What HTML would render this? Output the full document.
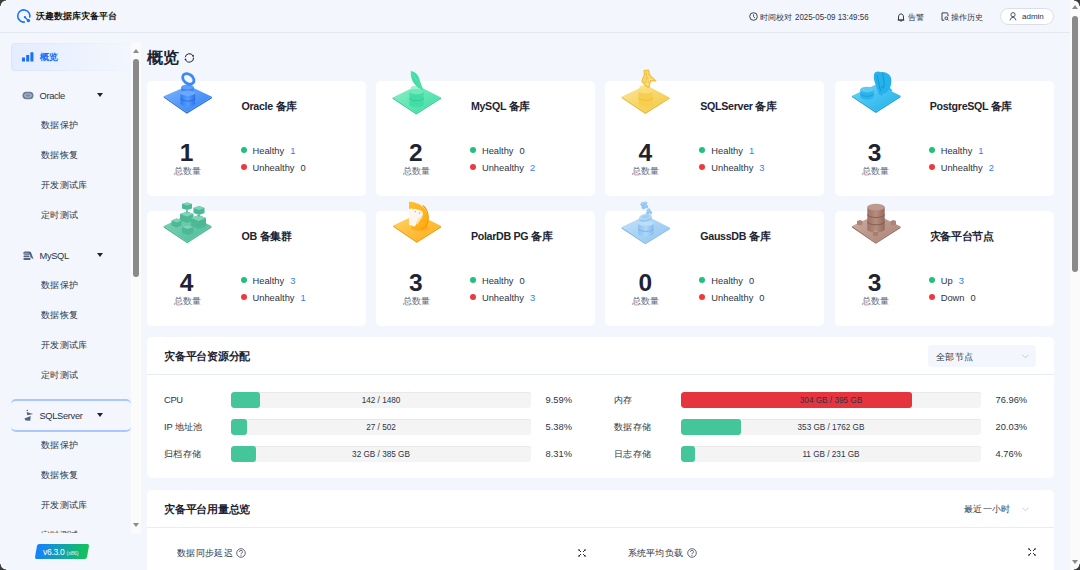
<!DOCTYPE html>
<html><head><meta charset="utf-8">
<style>
*{margin:0;padding:0;box-sizing:border-box}svg{display:block}
html,body{width:1080px;height:570px;overflow:hidden}
body{position:relative;background:#f3f6fd;font-family:"Liberation Sans",sans-serif;color:#1d2433}
.a{position:absolute;white-space:nowrap}
.hdr{left:0;top:0;width:1070px;height:33px;border-bottom:1px solid #e4e8f1}
.t8{font-size:8px;color:#2c3444}
.card{position:absolute;background:#fff;border-radius:5px;width:219px;height:114.5px}
.ctitle{position:absolute;left:95px;top:19px;font-size:10.67px;font-weight:bold;color:#1d2433;letter-spacing:-0.3px}
.cnum{position:absolute;left:20px;width:40px;text-align:center;top:59.5px;font-size:24.5px;font-weight:bold;color:#1d2433;line-height:24px}
.clbl{position:absolute;left:27px;top:85px;font-size:9.33px;color:#5d6779;line-height:10px}
.lg{position:absolute;left:94px;font-size:9.33px;color:#2c3444;line-height:10px}
.dot{display:inline-block;width:6px;height:6px;border-radius:50%;margin-right:6px;vertical-align:1px}
.g{background:#1ec27c}.r{background:#f0383f}
.v{margin-left:6px;color:#2f7cf6}.z{color:#2c3444}
.panel{position:absolute;background:#fff;border-radius:5px;left:146.5px;width:907px}
.ptitle{position:absolute;left:17.5px;font-size:10.67px;font-weight:bold;color:#1d2433}
.side{font-size:9.33px;color:#2c3444}
.bar{position:absolute;width:300px;height:16px;background:#f4f4f4;border-radius:3px;box-shadow:inset 0 1px 0 #e8e8e8;overflow:hidden}
.bar i{position:absolute;left:0;top:0;bottom:0;border-radius:3px}
.bar span{position:absolute;left:0;right:0;top:5.3px;text-align:center;font-size:8.2px;color:#2c3444;line-height:8px}
.rl{position:absolute;font-size:9.33px;color:#2c3444}.cj{letter-spacing:.33px}
</style></head><body>

<!-- header -->
<div class="a hdr"></div>
<svg class="a" style="left:16px;top:8px" width="16" height="16" viewBox="0 0 16 16">
 <path d="M13.7 9.6A6.1 6.1 0 1 0 8.9 14" fill="none" stroke="#1570ff" stroke-width="1.6"/>
 <line x1="8.9" y1="9.2" x2="12.4" y2="12.6" stroke="#1570ff" stroke-width="1.3"/>
 <circle cx="8.9" cy="9.2" r="1.1" fill="#1570ff"/><circle cx="12.4" cy="12.6" r="1.7" fill="#1570ff"/>
</svg>
<div class="a" style="left:36px;top:12px;font-size:8.6px;font-weight:bold;color:#111;line-height:9px">沃趣数据库灾备平台</div>

<svg class="a" style="left:748.5px;top:12px" width="9" height="9" viewBox="0 0 9 9"><circle cx="4.5" cy="4.5" r="3.8" fill="none" stroke="#3a4252" stroke-width="1"/><path d="M4.5 2.3V4.7L6 6" fill="none" stroke="#3a4252" stroke-width="0.9"/></svg>
<div class="a t8" style="left:759.5px;top:12.5px;line-height:9px">时间校对</div><div class="a t8" style="left:795px;top:12.5px;line-height:9px;font-size:9.2px;transform:scaleX(0.862);transform-origin:0 0">2025-05-09 13:49:56</div>

<svg class="a" style="left:897px;top:12.5px" width="8" height="9" viewBox="0 0 8 9"><path d="M1.5 7V4C1.5 2.2 2.4 0.9 4 0.9S6.5 2.2 6.5 4V7Z" fill="none" stroke="#2c3444" stroke-width="0.95" stroke-linejoin="round"/><path d="M0.7 7.1H7.3" stroke="#2c3444" stroke-width="1"/><path d="M3.2 8.1H4.8" stroke="#2c3444" stroke-width="0.9"/></svg>
<div class="a t8" style="left:908px;top:12.5px;line-height:9px">告警</div>

<svg class="a" style="left:940.5px;top:12px" width="9" height="10" viewBox="0 0 9 10"><path d="M3.3 8.2H1V0.9H6.2L7 1.7V4.2" fill="none" stroke="#2c3444" stroke-width="0.95"/><circle cx="5.3" cy="6.2" r="1.35" fill="none" stroke="#2c3444" stroke-width="0.9"/><path d="M6.3 7.2L7.6 8.5" stroke="#2c3444" stroke-width="0.9"/></svg>
<div class="a t8" style="left:951px;top:12.5px;line-height:9px">操作历史</div>

<div class="a" style="left:1000px;top:8px;width:53.5px;height:16.5px;border:1px solid #d9dfea;border-radius:9px;background:#fff"></div>
<svg class="a" style="left:1008.5px;top:12px" width="8" height="9" viewBox="0 0 8 9"><circle cx="4" cy="2.7" r="2.1" fill="none" stroke="#3a4252" stroke-width="0.9"/><path d="M1.1 8.4C1.4 6.4 2.5 5.4 4 5.4S6.6 6.4 6.9 8.4" fill="none" stroke="#3a4252" stroke-width="0.9"/></svg>
<div class="a t8" style="left:1022px;top:12px;line-height:9px">admin</div>

<!-- page scrollbar -->
<div class="a" style="left:1070px;top:0;width:10px;height:570px;background:#fbfbfb"></div>
<div class="a" style="left:1072px;top:5px;width:0;height:0;border-left:3px solid transparent;border-right:3px solid transparent;border-bottom:4.5px solid #8a8a8a"></div>
<div class="a" style="left:1072px;top:15.5px;width:6px;height:256px;background:#8a8a8a;border-radius:3px"></div>
<div class="a" style="left:1072px;top:559.5px;width:0;height:0;border-left:3px solid transparent;border-right:3px solid transparent;border-top:4.5px solid #8a8a8a"></div>

<!-- corners -->
<div class="a" style="left:0;top:0;width:6px;height:6px;background:radial-gradient(circle at 6px 6px,transparent 4px,#ffffff 4.8px,#3c3c3c 5.8px)"></div>
<div class="a" style="left:1074px;top:0;width:6px;height:6px;background:radial-gradient(circle at 0 6px,transparent 4px,#ffffff 4.8px,#3c3c3c 5.8px)"></div>
<div class="a" style="left:0;top:564px;width:6px;height:6px;background:radial-gradient(circle at 6px 0,transparent 4px,#ffffff 4.8px,#3c3c3c 5.8px)"></div>
<div class="a" style="left:1074px;top:564px;width:6px;height:6px;background:radial-gradient(circle at 0 0,transparent 4px,#ffffff 4.8px,#3c3c3c 5.8px)"></div>
<!-- sidebar -->
<div class="a" style="left:11px;top:43px;width:120px;height:28px;border-radius:4px 0 0 4px;background:linear-gradient(90deg,#d9e6fc,#f0f4fc)"></div><div class="a" style="left:12px;top:44px;width:119px;height:26px;border-radius:3px 0 0 3px;background:linear-gradient(90deg,#e4edff,#f3f6fd)"></div>
<svg class="a" style="left:22px;top:52px" width="12" height="10" viewBox="0 0 12 10"><rect x="0" y="5.5" width="3" height="4" fill="#1a6dff"/><rect x="4.2" y="3" width="3" height="6.5" fill="#1a6dff"/><rect x="8.4" y="0.3" width="3" height="9.2" fill="#1a6dff"/></svg>
<div class="a" style="left:40px;top:52px;font-size:9.33px;font-weight:bold;color:#1a6dff;line-height:10px">概览</div>

<!-- sidebar scrollbar -->
<div class="a" style="left:131px;top:43px;width:10px;height:490px;background:#fbfbfb"></div>
<div class="a" style="left:133px;top:49px;width:0;height:0;border-left:3px solid transparent;border-right:3px solid transparent;border-bottom:4.5px solid #8a8a8a"></div>
<div class="a" style="left:133px;top:58.5px;width:6px;height:218px;background:#8a8a8a;border-radius:3px"></div>
<div class="a" style="left:133px;top:523px;width:0;height:0;border-left:3px solid transparent;border-right:3px solid transparent;border-top:4.5px solid #8a8a8a"></div>

<div class="a" style="left:21.5px;top:90.5px;width:12px;height:12px"><svg width="12" height="9" viewBox="0 0 12 9"><rect x="0.5" y="0.7" width="11" height="7.6" rx="3.8" fill="#6d7c9a"/><rect x="2.4" y="2.5" width="7.2" height="4" rx="2" fill="#c3cbdc"/><rect x="3.3" y="3.3" width="5.4" height="2.4" rx="1.2" fill="#7d8ba6"/></svg></div><div class="a side" style="left:39.5px;top:90.5px;line-height:10px;letter-spacing:-0.35px">Oracle</div><div class="a" style="left:96.5px;top:93px;width:0;height:0;border-left:3px solid transparent;border-right:3px solid transparent;border-top:4px solid #1d2433"></div>
<div class="a side cj" style="left:41px;top:120px;line-height:10px">数据保护</div>
<div class="a side cj" style="left:41px;top:150px;line-height:10px">数据恢复</div>
<div class="a side cj" style="left:41px;top:180px;line-height:10px">开发测试库</div>
<div class="a side cj" style="left:41px;top:210px;line-height:10px">定时测试</div>
<div class="a" style="left:21.5px;top:250.5px;width:12px;height:12px"><svg width="12" height="10" viewBox="0 0 12 10"><rect x="1.4" y="0.6" width="7.2" height="3.1" rx="1.5" fill="#56647f"/><rect x="2.2" y="1.9" width="4.5" height="0.6" fill="#c9d0df"/><rect x="1.4" y="4.4" width="6.2" height="1.7" rx="0.8" fill="#56647f"/><rect x="1.4" y="6.7" width="7.2" height="2.3" rx="1.1" fill="#56647f"/><path d="M7.4 0.8L8.9 1.1L11.6 8.2L8.4 6.3Z" fill="#56647f"/></svg></div><div class="a side" style="left:39.5px;top:250.5px;line-height:10px;letter-spacing:-0.35px">MySQL</div><div class="a" style="left:96.5px;top:253px;width:0;height:0;border-left:3px solid transparent;border-right:3px solid transparent;border-top:4px solid #1d2433"></div>
<div class="a side cj" style="left:41px;top:280px;line-height:10px">数据保护</div>
<div class="a side cj" style="left:41px;top:310px;line-height:10px">数据恢复</div>
<div class="a side cj" style="left:41px;top:340px;line-height:10px">开发测试库</div>
<div class="a side cj" style="left:41px;top:370px;line-height:10px">定时测试</div>
<div class="a" style="left:11px;top:398.5px;width:120px;height:33.5px;border-radius:5px;border-top:2px solid #a9c7fd;border-bottom:2px solid #a9c7fd;background:#f3f6fd"></div><div class="a" style="left:21.5px;top:409px;width:12px;height:12px"><svg width="12" height="12" viewBox="0 0 12 12"><circle cx="5.3" cy="1.5" r="0.8" fill="#56647f"/><path d="M4.6 2.9L11.2 5L5.3 6.3Z" fill="#56647f"/><path d="M2.4 9.5L8.7 7.1L8.3 11.8L3.6 11.6Z" fill="#56647f"/></svg></div><div class="a side" style="left:39.5px;top:410.5px;line-height:10px;letter-spacing:-0.35px">SQLServer</div><div class="a" style="left:96.5px;top:413px;width:0;height:0;border-left:3px solid transparent;border-right:3px solid transparent;border-top:4px solid #1d2433"></div>
<div class="a" style="left:0;top:0;width:131px;height:533px;overflow:hidden">
<div class="a side cj" style="left:41px;top:440px;line-height:10px">数据保护</div>
<div class="a side cj" style="left:41px;top:470px;line-height:10px">数据恢复</div>
<div class="a side cj" style="left:41px;top:500px;line-height:10px">开发测试库</div>
<div class="a side cj" style="left:41px;top:530px;line-height:10px">定时测试</div>
</div>
<div class="a" style="left:36px;top:544px;width:52px;height:15px;transform:skewX(-10deg);border-radius:2px;background:linear-gradient(90deg,#1680ff,#12c456)"></div>
<div class="a" style="left:43px;top:547.5px;font-size:8.5px;color:#fff;line-height:9px;letter-spacing:-0.3px">v6.3.0 <span style="font-size:5.5px;opacity:.85;letter-spacing:-0.1px">(x86)</span></div>

<!-- main -->
<div class="a" style="left:147px;top:49px;font-size:16px;font-weight:bold;color:#1d2433;line-height:17px">概览</div>
<svg class="a" style="left:184px;top:52.5px" width="11" height="10" viewBox="0 0 11 10"><path d="M9.1 2.9A4.2 4.2 0 0 0 1.25 4.24M1.45 6.34A4.2 4.2 0 0 0 9.58 4.53" fill="none" stroke="#1d2433" stroke-width="1"/><circle cx="9.1" cy="2.9" r=".85" fill="#1d2433"/><circle cx="1.5" cy="6.3" r=".85" fill="#1d2433"/></svg>

<div class="card" style="left:146.5px;top:81px;height:114.5px">
 <div class="ctitle" style="top:20px;line-height:11px">Oracle 备库</div>
 <div class="cnum">1</div>
 <div class="clbl">总数量</div>
 <div class="lg" style="top:65px"><span class="dot g"></span>Healthy<span class="v">1</span></div>
 <div class="lg" style="top:82px"><span class="dot r"></span>Unhealthy<span class="v z">0</span></div>
</div>
<div class="a" style="left:160.5px;top:67px;width:54px;height:50px"><svg width="54" height="50" viewBox="0 0 54 50"><defs><linearGradient id="p1" x1="0" y1="0" x2="1" y2="1"><stop offset="0" stop-color="#7db5ff"/><stop offset="1" stop-color="#2f7ff0"/></linearGradient><linearGradient id="c1" x1="0" x2="1"><stop offset="0" stop-color="#2d7cf0"/><stop offset=".5" stop-color="#5a9cff"/><stop offset="1" stop-color="#2a74e8"/></linearGradient></defs>
<path d="M2.7 29.3L27.5 18.5L50.9 29.8L25.8 45.3Z" fill="url(#p1)"/><path d="M2.7 29.3L25.8 45.3L50.9 29.8L50.9 31.2L25.8 46.8L2.7 30.6Z" fill="#2a6fe0"/>
<path d="M20.2 20V23.5A6.3 2.8 0 0 0 32.8 23.5V20Z" fill="#3c86f2"/><ellipse cx="26.5" cy="20" rx="6.3" ry="2.6" fill="#5d9ffa"/>
<path d="M19.5 26.2V36.6A7.3 2.8 0 0 0 34.1 36.6V26.2Z" fill="url(#c1)"/><path d="M19.5 31.3A7.3 2.8 0 0 0 34.1 31.3" fill="none" stroke="#2566d6" stroke-width=".8"/><ellipse cx="26.8" cy="26.2" rx="7.3" ry="2.7" fill="#6ba8ff"/>
<ellipse cx="27.3" cy="11.9" rx="6.3" ry="4.6" fill="none" stroke="#3b88f6" stroke-width="2.8" transform="rotate(40 27.3 11.9)"/></svg>
</div>
<div class="card" style="left:375.9px;top:81px;height:114.5px">
 <div class="ctitle" style="top:20px;line-height:11px">MySQL 备库</div>
 <div class="cnum">2</div>
 <div class="clbl">总数量</div>
 <div class="lg" style="top:65px"><span class="dot g"></span>Healthy<span class="v z">0</span></div>
 <div class="lg" style="top:82px"><span class="dot r"></span>Unhealthy<span class="v">2</span></div>
</div>
<div class="a" style="left:389.9px;top:67px;width:54px;height:50px">
<svg width="54" height="50" viewBox="0 0 54 50"><defs><linearGradient id="p2" x1="0" y1="0" x2="1" y2="1"><stop offset="0" stop-color="#8eefc9"/><stop offset="1" stop-color="#38dca0"/></linearGradient></defs>
<path d="M2.6 30.4L27.4 18.5L51 30.4L26.3 46.2Z" fill="url(#p2)"/><path d="M2.6 30.4L26.3 46.2L51 30.4L51 31.8L26.3 47.5L2.6 31.7Z" fill="#30c78f"/>
<ellipse cx="26.2" cy="21" rx="5.5" ry="2.3" fill="#9af0cf"/>
<path d="M19.5 24.6V37.7A7.1 2.7 0 0 0 33.7 37.7V24.6Z" fill="#44dca6"/><path d="M19.5 31A7.1 2.7 0 0 0 33.7 31" fill="none" stroke="#2fc48e" stroke-width=".8"/><ellipse cx="26.6" cy="24.6" rx="7.1" ry="2.6" fill="#6fe8bb"/>
<path d="M20.8 4C25.5 4.8 28.8 8.5 29.6 12.8C30.6 16.8 32.5 19.8 33.4 23.4C30.5 22.2 26.5 19.8 23.8 16.2C21.5 12.8 20.5 8.5 20.8 4Z" fill="#43dca5"/><path d="M21.5 5.5C24 9 26.5 13 32.5 22.5" stroke="#6fe8bb" stroke-width=".6" fill="none"/></svg>
</div>
<div class="card" style="left:605.3px;top:81px;height:114.5px">
 <div class="ctitle" style="top:20px;line-height:11px">SQLServer 备库</div>
 <div class="cnum">4</div>
 <div class="clbl">总数量</div>
 <div class="lg" style="top:65px"><span class="dot g"></span>Healthy<span class="v">1</span></div>
 <div class="lg" style="top:82px"><span class="dot r"></span>Unhealthy<span class="v">3</span></div>
</div>
<div class="a" style="left:619.3px;top:67px;width:54px;height:50px">
<svg width="54" height="50" viewBox="0 0 54 50"><defs><linearGradient id="p3" x1="0" y1="0" x2="1" y2="1"><stop offset="0" stop-color="#fbe69a"/><stop offset="1" stop-color="#f4c63c"/></linearGradient></defs>
<path d="M2.6 29.8L27 18L50.5 30.4L26.3 45.6Z" fill="url(#p3)"/><path d="M2.6 29.8L26.3 45.6L50.5 30.4L50.5 31.8L26.3 47L2.6 31.1Z" fill="#e9b630"/>
<ellipse cx="26" cy="20.5" rx="5.5" ry="2.3" fill="#fbe18a"/>
<path d="M19.5 24V37.2A7.1 2.7 0 0 0 33.7 37.2V24Z" fill="#f7cf50"/><path d="M19.5 30.6A7.1 2.7 0 0 0 33.7 30.6" fill="none" stroke="#e8b938" stroke-width=".8"/><ellipse cx="26.6" cy="24" rx="7.1" ry="2.6" fill="#fadc78"/>
<path d="M25 3.6L29.5 3.1L30 6.2L31.6 9.2L36.8 13.9L31.6 13.6L30.6 17L29.8 20.6L26 18.2L23 14.6L24 11L25.5 8Z" fill="#f6cb48" fill-opacity=".55" stroke="#f2c23a" stroke-width="1.3" stroke-linejoin="round"/><path d="M25.5 6.5L30.5 7.5M24 11.5L32 11M23.8 14.5L31 15.5M27.5 4L27 18.5M29.5 8L25 17M26 5.5L30.5 17" stroke="#f4c73f" stroke-width=".8" fill="none"/></svg>
</div>
<div class="card" style="left:834.7px;top:81px;height:114.5px">
 <div class="ctitle" style="top:20px;line-height:11px">PostgreSQL 备库</div>
 <div class="cnum">3</div>
 <div class="clbl">总数量</div>
 <div class="lg" style="top:65px"><span class="dot g"></span>Healthy<span class="v">1</span></div>
 <div class="lg" style="top:82px"><span class="dot r"></span>Unhealthy<span class="v">2</span></div>
</div>
<div class="a" style="left:848.7px;top:67px;width:54px;height:50px">
<svg width="54" height="50" viewBox="0 0 54 50"><defs><linearGradient id="p4" x1="0" y1="0" x2="1" y2="1"><stop offset="0" stop-color="#6fd5f7"/><stop offset="1" stop-color="#1aaeea"/></linearGradient></defs>
<path d="M3.1 28.8L28 17L51.5 28.8L26.8 44.6Z" fill="url(#p4)"/><path d="M3.1 28.8L26.8 44.6L51.5 28.8L51.5 30.2L26.8 46L3.1 30.1Z" fill="#139ed8"/>
<path d="M11.3 22.6V30A6.7 2.7 0 0 0 24.7 30V22.6Z" fill="#2cb5ec"/><path d="M11.3 26.6A6.7 2.7 0 0 0 24.7 26.6" fill="none" stroke="#1599d2" stroke-width=".8"/><ellipse cx="18" cy="22.6" rx="6.7" ry="2.8" fill="#5ccaf5"/>
<path d="M25 7.5C25.5 4 29.5 3.8 32 5.2C35 4.5 39.5 6 41.5 9.5C43 12.5 42.5 17 41 21L43.5 23.5L41 24.5L40 22.5C39 25 36 27 34 26.5L33 29L30 27.5C29 24 27.5 20.5 26 16C24.8 12.5 24.6 10 25 7.5Z" fill="#25b2ec"/><path d="M28 8C29 12 30 18 31.5 24M33.5 6.5C34 11 36 15 35 20C34.5 22 33 22 33 19" fill="none" stroke="#1392cc" stroke-width=".9"/></svg>
</div>
<div class="card" style="left:146.5px;top:211.3px;height:114.5px">
 <div class="ctitle" style="top:20px;line-height:11px">OB 备集群</div>
 <div class="cnum">4</div>
 <div class="clbl">总数量</div>
 <div class="lg" style="top:65px"><span class="dot g"></span>Healthy<span class="v">3</span></div>
 <div class="lg" style="top:82px"><span class="dot r"></span>Unhealthy<span class="v">1</span></div>
</div>
<div class="a" style="left:160.5px;top:197.3px;width:54px;height:50px">
<svg width="54" height="50" viewBox="0 0 54 50"><defs><linearGradient id="p5" x1="0" y1="0" x2="1" y2="1"><stop offset="0" stop-color="#7fd3b8"/><stop offset="1" stop-color="#4cbd99"/></linearGradient></defs>
<path d="M2.7 29.1L27 17.5L50.5 29.1L26.3 44.9Z" fill="url(#p5)"/><path d="M2.7 29.1L26.3 44.9L50.5 29.1L50.5 30.5L26.3 46.3L2.7 30.4Z" fill="#45b08e"/>
<g fill="#4db894"><path d="M10.5 23.5L15.5 21.5L20.5 23.5V28.5L15.5 30.5L10.5 28.5Z"/><path d="M21 30L26.5 28L32.5 30V36L26.5 38L21 36Z"/><path d="M19 17L26 14.5L32.5 17V23.5L26 26L19 23.5Z"/><path d="M30 21L37.5 18L45 21V29L37.5 32L30 29Z"/><path d="M21 7L26 5.5L31 7V11.5L26 13L21 11.5Z"/><path d="M32.5 11L38 9L43.5 11V16L38 18L32.5 16Z"/></g>
<g fill="#7dd4b7"><path d="M10.5 23.5L15.5 21.5L20.5 23.5L15.5 25.5Z"/><path d="M21 30L26.5 28L32.5 30L26.5 32Z"/><path d="M19 17L26 14.5L32.5 17L26 19.5Z"/><path d="M30 21L37.5 18L45 21L37.5 24Z"/><path d="M21 7L26 5.5L31 7L26 8.5Z"/><path d="M32.5 11L38 9L43.5 11L38 13Z"/></g>
<path d="M26 13V15.5M38 18V19.5" stroke="#45ad8a" stroke-width="1.2"/></svg>
</div>
<div class="card" style="left:375.9px;top:211.3px;height:114.5px">
 <div class="ctitle" style="top:20px;line-height:11px">PolarDB PG 备库</div>
 <div class="cnum">3</div>
 <div class="clbl">总数量</div>
 <div class="lg" style="top:65px"><span class="dot g"></span>Healthy<span class="v z">0</span></div>
 <div class="lg" style="top:82px"><span class="dot r"></span>Unhealthy<span class="v">3</span></div>
</div>
<div class="a" style="left:389.9px;top:197.3px;width:54px;height:50px">
<svg width="54" height="50" viewBox="0 0 54 50"><defs><linearGradient id="p6" x1="0" y1="0" x2="1" y2="1"><stop offset="0" stop-color="#ffd36b"/><stop offset="1" stop-color="#ffab14"/></linearGradient><linearGradient id="b6" x1="0" y1="0" x2="1" y2="1"><stop offset="0" stop-color="#ffc02e"/><stop offset="1" stop-color="#ffa90f"/></linearGradient></defs>
<path d="M3.2 28.5L27.5 17L51 29.1L26.8 44.3Z" fill="url(#p6)"/><path d="M3.2 28.5L26.8 44.3L51 29.1L51 30.5L26.8 45.7L3.2 29.8Z" fill="#f29b05"/>
<ellipse cx="30" cy="31" rx="9" ry="3" fill="#f7a20f" opacity=".6"/>
<path d="M19 4.7C28 4.5 37.5 11 38.2 20C38.5 26 36 31.5 31 31.5C26 31.5 21 29 19 28Z" fill="url(#b6)"/>
<path d="M33 8.5C36.5 11.5 38.2 15.5 38.2 20C38.5 26 36 31.5 31 31.5" fill="none" stroke="#f39a06" stroke-width="1.2"/>
<path d="M19 12.3L21.5 11.3L23 12.3L25 11.8L27 12.5L30 13.3L32.5 14.8L33 17.5L31 20L29.5 20.8L28 23L26.5 26L25 29.5L19 28Z" fill="#fbf6ee"/>
<path d="M26 26C27 22 29 20.5 31 20L33 17.5L32 21C30 23 28.5 25 27.5 28Z" fill="#fde3bd"/>
<circle cx="25.3" cy="14.5" r=".75" fill="#ffae1a"/><circle cx="29.6" cy="16.1" r=".8" fill="#ffae1a"/></svg>
</div>
<div class="card" style="left:605.3px;top:211.3px;height:114.5px">
 <div class="ctitle" style="top:20px;line-height:11px">GaussDB 备库</div>
 <div class="cnum">0</div>
 <div class="clbl">总数量</div>
 <div class="lg" style="top:65px"><span class="dot g"></span>Healthy<span class="v z">0</span></div>
 <div class="lg" style="top:82px"><span class="dot r"></span>Unhealthy<span class="v z">0</span></div>
</div>
<div class="a" style="left:619.3px;top:197.3px;width:54px;height:50px">
<svg width="54" height="50" viewBox="0 0 54 50"><defs><linearGradient id="p7" x1="0" y1="0" x2="1" y2="1"><stop offset="0" stop-color="#c6e2f9"/><stop offset="1" stop-color="#8dc4f0"/></linearGradient><linearGradient id="c7" x1="0" x2="1"><stop offset="0" stop-color="#8cc2f0"/><stop offset=".5" stop-color="#b0d6f6"/><stop offset="1" stop-color="#86bdee"/></linearGradient></defs>
<path d="M2.6 30.1L27 18.5L51 30.7L26.3 45.9Z" fill="url(#p7)"/><path d="M2.6 30.1L26.3 45.9L51 30.7L51 32.1L26.3 47.3L2.6 31.4Z" fill="#7ab6ea"/>
<path d="M19.3 26.4V36.6A7.6 2.8 0 0 0 34.5 36.6V26.4Z" fill="url(#c7)"/><path d="M19.3 31.6A7.6 2.8 0 0 0 34.5 31.6" fill="none" stroke="#6fb0ec" stroke-width=".8"/><ellipse cx="26.9" cy="26.4" rx="7.6" ry="2.7" fill="#bcdcf7"/>
<ellipse cx="26.5" cy="21.6" rx="6.5" ry="3" fill="#93c6f1" transform="rotate(-10 26.5 21.6)"/><ellipse cx="26.5" cy="19.8" rx="6.5" ry="3" fill="#b6d9f7" transform="rotate(-10 26.5 19.8)"/><ellipse cx="26.5" cy="19.9" rx="4" ry="1.6" fill="#9fcdf3" transform="rotate(-10 26.5 19.9)"/>
<g fill="#92c5f1"><circle cx="23.8" cy="7.2" r="2.3"/><circle cx="26.3" cy="6.3" r="1.9"/><circle cx="24.6" cy="10.3" r="2"/><circle cx="27.6" cy="9.6" r="1.6"/><circle cx="29.6" cy="13.2" r="1.9"/><circle cx="31.6" cy="15.6" r="1.5"/><circle cx="28.6" cy="15.8" r="1.6"/></g>
<g fill="#b8dbf8"><circle cx="23.3" cy="6.5" r="1"/><circle cx="26" cy="5.8" r=".8"/><circle cx="29.2" cy="12.6" r=".9"/></g></svg>
</div>
<div class="card" style="left:834.7px;top:211.3px;height:114.5px">
 <div class="ctitle" style="top:20px;line-height:11px">灾备平台节点</div>
 <div class="cnum">3</div>
 <div class="clbl">总数量</div>
 <div class="lg" style="top:65px"><span class="dot g"></span>Up<span class="v">3</span></div>
 <div class="lg" style="top:82px"><span class="dot r"></span>Down<span class="v z">0</span></div>
</div>
<div class="a" style="left:848.7px;top:197.3px;width:54px;height:50px">
<svg width="54" height="50" viewBox="0 0 54 50"><defs><linearGradient id="p8" x1="0" y1="0" x2="1" y2="1"><stop offset="0" stop-color="#cfb0a4"/><stop offset="1" stop-color="#a98072"/></linearGradient><linearGradient id="c8" x1="0" x2="1"><stop offset="0" stop-color="#9c7264"/><stop offset=".5" stop-color="#b58e80"/><stop offset="1" stop-color="#946a5c"/></linearGradient></defs>
<path d="M3.1 29.1L27.5 17.5L51.5 29.6L26.8 45.4Z" fill="url(#p8)"/><path d="M3.1 29.1L26.8 45.4L51.5 29.6L51.5 31L26.8 46.8L3.1 30.4Z" fill="#94695b"/>
<path d="M8 24L11 23L13.5 24V27.5L11 28.5L8 27.5Z" fill="#ad8576"/><path d="M41.5 24L44.5 23L47 24V27.5L44.5 28.5L41.5 27.5Z" fill="#ad8576"/>
<path d="M18.3 10.1V32.2A8.7 3.2 0 0 0 35.7 32.2V10.1Z" fill="url(#c8)"/><path d="M18.3 17.5A8.7 3 0 0 0 35.7 17.5M18.3 24.8A8.7 3 0 0 0 35.7 24.8" fill="none" stroke="#83594c" stroke-width=".9"/><ellipse cx="27" cy="10.1" rx="8.7" ry="3.3" fill="#bd9a8d"/><path d="M24 34.3L26.5 33.3L29 34.3V38.3L26.5 39.3L24 38.3Z" fill="#a77e70"/><path d="M24 34.3L26.5 33.3L29 34.3L26.5 35.3Z" fill="#c29d90"/></svg>
</div>

<!-- resource panel -->
<div class="panel" style="top:337px;height:141px">
 <div class="ptitle" style="top:14px;line-height:11px;letter-spacing:-0.22px">灾备平台资源分配</div>
 <div class="a" style="left:781.5px;top:8px;width:108px;height:21.5px;background:#f3f6fd;border-radius:4px"></div>
 <div class="a" style="left:789.5px;top:15px;font-size:9.33px;color:#2c3444;line-height:10px;letter-spacing:.33px">全部节点</div>
 <svg class="a" style="left:875px;top:16.5px" width="7" height="5" viewBox="0 0 7 5"><path d="M0.5 0.8L3.5 3.8L6.5 0.8" fill="none" stroke="#b8bfcc" stroke-width="0.8"/></svg>
 <div class="a" style="left:0;top:37px;width:907px;height:1px;background:#e8ecf5"></div>
 <div class="rl" style="left:17.5px;top:58px;line-height:10px;letter-spacing:-0.3px">CPU</div>
<div class="bar" style="left:84.5px;top:54.5px"><i style="width:28.8px;background:#45c69a"></i><span>142 / 1480</span></div>
<div class="rl" style="left:399px;top:58px;line-height:10px">9.59%</div>
<div class="rl" style="left:17.5px;top:85px;line-height:10px">IP 地址池</div>
<div class="bar" style="left:84.5px;top:81.5px"><i style="width:16.1px;background:#45c69a"></i><span>27 / 502</span></div>
<div class="rl" style="left:399px;top:85px;line-height:10px">5.38%</div>
<div class="rl cj" style="left:17.5px;top:112px;line-height:10px">归档存储</div>
<div class="bar" style="left:84.5px;top:108.5px"><i style="width:24.9px;background:#45c69a"></i><span>32 GB / 385 GB</span></div>
<div class="rl" style="left:399px;top:112px;line-height:10px">8.31%</div>
<div class="rl cj" style="left:467.5px;top:58px;line-height:10px">内存</div>
<div class="bar" style="left:534.5px;top:54.5px"><i style="width:230.9px;background:#e5343d"></i><span>304 GB / 395 GB</span></div>
<div class="rl" style="left:849px;top:58px;line-height:10px">76.96%</div>
<div class="rl cj" style="left:467.5px;top:85px;line-height:10px">数据存储</div>
<div class="bar" style="left:534.5px;top:81.5px"><i style="width:60.1px;background:#45c69a"></i><span>353 GB / 1762 GB</span></div>
<div class="rl" style="left:849px;top:85px;line-height:10px">20.03%</div>
<div class="rl cj" style="left:467.5px;top:112px;line-height:10px">日志存储</div>
<div class="bar" style="left:534.5px;top:108.5px"><i style="width:14.3px;background:#45c69a"></i><span>11 GB / 231 GB</span></div>
<div class="rl" style="left:849px;top:112px;line-height:10px">4.76%</div>
</div>

<!-- usage panel -->
<div class="panel" style="top:490px;height:100px">
 <div class="ptitle" style="top:14px;line-height:11px;letter-spacing:-0.22px">灾备平台用量总览</div>
 <div class="a" style="left:817.5px;top:14px;font-size:9.33px;color:#2c3444;line-height:10px;letter-spacing:.33px">最近一小时</div>
 <svg class="a" style="left:875px;top:16.5px" width="7" height="5" viewBox="0 0 7 5"><path d="M0.5 0.8L3.5 3.8L6.5 0.8" fill="none" stroke="#b8bfcc" stroke-width="0.8"/></svg>
 <div class="a" style="left:0;top:37px;width:907px;height:1px;background:#e8ecf5"></div>
 <div class="a side cj" style="left:30.5px;top:57.5px;line-height:10px">数据同步延迟</div>
 <div class="a" style="left:89.5px;top:57.5px"><svg width="10" height="10" viewBox="0 0 10 10"><circle cx="5" cy="5" r="4.3" fill="none" stroke="#3a4252" stroke-width="0.8"/><path d="M3.5 3.9A1.5 1.5 0 1 1 5.3 5.3C5 5.5 5 5.8 5 6.3" fill="none" stroke="#3a4252" stroke-width="0.8"/><circle cx="5" cy="7.5" r="0.5" fill="#3a4252"/></svg></div>
 <div class="a" style="left:431px;top:58.5px"><svg width="9" height="9" viewBox="0 0 9 9"><path d="M1 1L2.7 2.7M7 1L5.3 2.7M1 7L2.7 5.3M7 7L5.4 5.4" fill="none" stroke="#1d2433" stroke-width="1" stroke-linecap="round"/><circle cx="1" cy="1" r=".8" fill="#1d2433"/><circle cx="7" cy="1" r=".8" fill="#1d2433"/><circle cx="1" cy="7" r=".8" fill="#1d2433"/><circle cx="7" cy="7" r=".8" fill="#1d2433"/></svg></div>
 <div class="a side cj" style="left:481px;top:57.5px;line-height:10px">系统平均负载</div>
 <div class="a" style="left:540px;top:57.5px"><svg width="10" height="10" viewBox="0 0 10 10"><circle cx="5" cy="5" r="4.3" fill="none" stroke="#3a4252" stroke-width="0.8"/><path d="M3.5 3.9A1.5 1.5 0 1 1 5.3 5.3C5 5.5 5 5.8 5 6.3" fill="none" stroke="#3a4252" stroke-width="0.8"/><circle cx="5" cy="7.5" r="0.5" fill="#3a4252"/></svg></div>
 <div class="a" style="left:881.5px;top:58px"><svg width="9" height="9" viewBox="0 0 9 9"><path d="M1 1L2.7 2.7M7 1L5.3 2.7M1 7L2.7 5.3M7 7L5.4 5.4" fill="none" stroke="#1d2433" stroke-width="1" stroke-linecap="round"/><circle cx="1" cy="1" r=".8" fill="#1d2433"/><circle cx="7" cy="1" r=".8" fill="#1d2433"/><circle cx="1" cy="7" r=".8" fill="#1d2433"/><circle cx="7" cy="7" r=".8" fill="#1d2433"/></svg></div>
</div>

</body></html>
